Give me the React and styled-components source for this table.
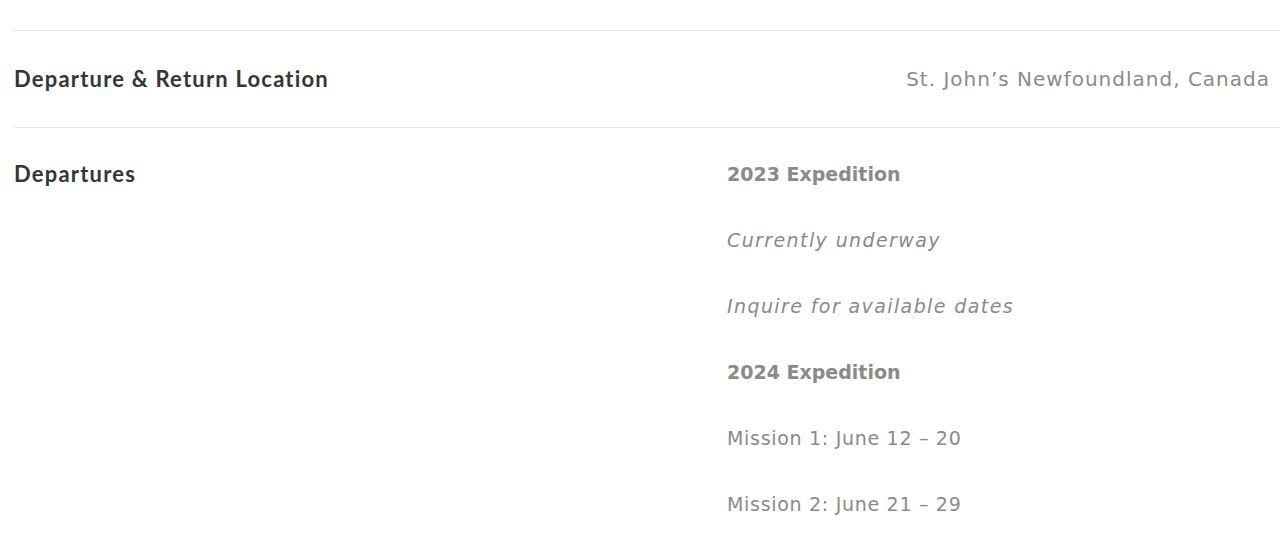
import React from "react";
import styled, { createGlobalStyle } from "styled-components";

const GlobalStyle = createGlobalStyle`
	html, body {
		margin: 0;
		padding: 0;
		background: #fff;
	}
	body {
		font-family: "Lato", "Liberation Sans", sans-serif;
	}
`;

function App() {
	return (
		<>
			<GlobalStyle />
			<Table>
				<Row>
					<Label>Departure &amp; Return Location</Label>
					<Value>St. John’s Newfoundland, Canada</Value>
				</Row>
				<DeparturesRow>
					<Label>Departures</Label>
					<List>
						<Item bold>2023 Expedition</Item>
						<Item italic>Currently underway</Item>
						<Item italic>Inquire for available dates</Item>
						<Item bold>2024 Expedition</Item>
						<Item>Mission 1: June 12 – 20</Item>
						<Item>Mission 2: June 21 – 29</Item>
					</List>
				</DeparturesRow>
			</Table>
		</>
	);
}

export default App;

const Table = styled.section`
	padding-top: 30px;
	padding-left: 14px;
`;

const Row = styled.div`
	display: flex;
	justify-content: space-between;
	align-items: center;
	height: 96px;
	border-top: 1.5px solid #e6e6e6;
	padding-right: 10px;
`;

const DeparturesRow = styled.div`
	display: grid;
	grid-template-columns: 713px 1fr;
	align-items: start;
	border-top: 1.5px solid #e6e6e6;
	padding-top: 30px;
`;

const Label = styled.h4`
	margin: 0;
	font-family: "Lato", "Liberation Sans", sans-serif;
	font-weight: 700;
	font-size: 22px;
	letter-spacing: 1.2px;
	line-height: 32px;
	color: #353535;
`;

const Value = styled.span`
	font-family: "DejaVu Sans", "Open Sans", sans-serif;
	font-size: 20px;
	letter-spacing: 1px;
	color: #8a8a8a;
`;

const List = styled.ul`
	list-style: none;
	margin: 0;
	padding: 0;
	display: flex;
	flex-direction: column;
	gap: 34px;
`;

const Item = styled.li`
	font-family: "DejaVu Sans", "Open Sans", sans-serif;
	font-size: 19px;
	line-height: 32px;
	color: #8a8a8a;
	font-weight: ${(p) => (p.bold ? 700 : 400)};
	font-style: ${(p) => (p.italic ? "italic" : "normal")};
	letter-spacing: ${(p) => (p.bold ? "0" : p.italic ? "1.4px" : "0.7px")};
`;
